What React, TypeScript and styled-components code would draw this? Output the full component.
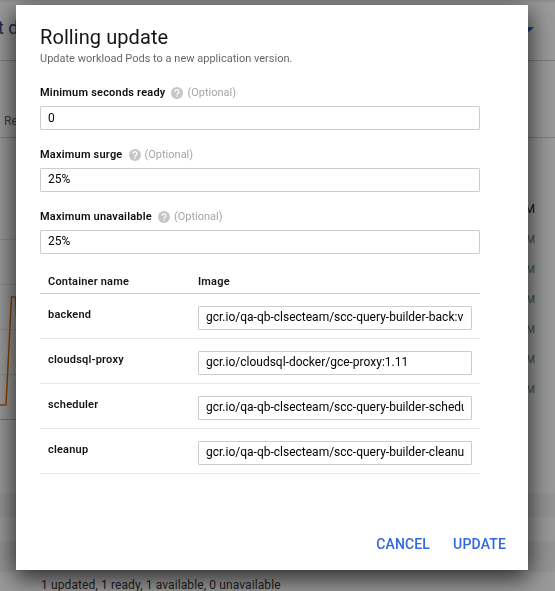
import React from 'react';
import styled, { createGlobalStyle } from 'styled-components';

const GlobalStyle = createGlobalStyle`
  * { box-sizing: border-box; }
  body { margin: 0; overflow: hidden; font-family: Roboto, "Liberation Sans", sans-serif; color: rgba(0,0,0,.92); background: #fff; }
`;

const Page = styled.div`
  height: 591px;
  display: flex;
  flex-direction: column;
  overflow: hidden;
`;

const PageHeader = styled.header`
  flex: none;
  height: 61px;
  display: flex;
  justify-content: space-between;
  border-bottom: 1px solid #d0d0d0;
  background: linear-gradient(#e6e6e6, #fff 3px);
`;

const PageTitle = styled.div`
  margin-left: -2px;
  padding-top: 17px;
  font-size: 18px;
  line-height: 21px;
  letter-spacing: -0.1px;
  color: #33497f;
`;

const Caret = styled.div`
  margin: 27px 21px 0 0;
  width: 10px;
  height: 5px;
  background: #3367d6;
  clip-path: polygon(0 0, 100% 0, 50% 100%);
`;

const PageTabs = styled.div`
  flex: none;
  height: 77px;
  padding: 52px 0 0 4px;
  font-size: 12px;
  line-height: 16px;
  color: #606060;
  border-bottom: 1px solid #d0d0d0;
`;

const ChartArea = styled.div`
  flex: none;
  height: 355px;
  display: flex;
  justify-content: space-between;
`;

const Legend = styled.div`
  width: 45px;
  padding: 63px 0 0 13px;
`;

const LegendItem = styled.div<{ $head?: boolean }>`
  width: 12px;
  display: flex;
  justify-content: flex-end;
  margin-bottom: ${p => (p.$head ? 8 : 0)}px;
  font-size: ${p => (p.$head ? 12 : 10)}px;
  line-height: ${p => (p.$head ? 16 : 30)}px;
  color: ${p => (p.$head ? '#222' : '#777')};
`;

const Band = styled.div<{ $h: number; $shaded?: boolean }>`
  flex: none;
  height: ${p => p.$h}px;
  background: ${p => (p.$shaded ? '#f5f5f5' : '#fff')};
`;

const Status = styled.div`
  padding: 5px 0 0 41px;
  font-size: 12px;
  line-height: 16px;
  letter-spacing: 0.11px;
  color: #333;
`;

const Scrim = styled.div`
  position: fixed;
  inset: 0;
  padding: 5px 27px 21px 16px;
  background: rgba(0, 0, 0, 0.4);
`;

const Dialog = styled.div`
  height: 565px;
  padding: 20px 20px 16px 24px;
  display: flex;
  flex-direction: column;
  background: #fff;
  box-shadow: 0 5px 26px rgba(0, 0, 0, 0.42), 0 8px 22px rgba(0, 0, 0, 0.5);
`;

const Heading = styled.h1`
  margin: 0;
  font-size: 20px;
  font-weight: 400;
  line-height: 24px;
  letter-spacing: 0.08px;
`;

const Subtitle = styled.p`
  margin: 2px 0 18px;
  font-size: 11px;
  line-height: 16px;
  color: rgba(0, 0, 0, 0.62);
`;

const Field = styled.label`
  width: 440px;
  height: 62px;
  display: flex;
  flex-direction: column;
  gap: 5px;
`;

const LabelRow = styled.span`
  height: 16px;
  display: flex;
  align-items: center;
  font-size: 11px;
  line-height: 16px;
  color: #a6a6a6;
  strong { font-weight: 600; letter-spacing: 0.21px; color: rgba(0, 0, 0, 0.95); }
  svg { flex: none; margin: 0 4px 1px 6px; }
`;

const Input = styled.input<{ $raised?: boolean }>`
  display: block;
  width: 100%;
  height: 24px;
  padding: ${p => (p.$raised ? '0 7px 3px' : '1px 7px 2px')};
  border: 1px solid #ccc;
  border-radius: 1px;
  outline: 0;
  background: #fff;
  color: #000;
  font: 400 12px/16px Roboto, "Liberation Sans", sans-serif;
`;

const ContainerTable = styled.div`
  width: 440px;
  margin-top: -5px;
`;

const Row = styled.div<{ $header?: boolean }>`
  height: ${p => (p.$header ? 28 : 45)}px;
  padding: ${p => (p.$header ? '8px 8px 0' : '12px 8px 0')};
  display: grid;
  grid-template-columns: 150px 274px;
  align-items: start;
  font-size: 11px;
  font-weight: 600;
  letter-spacing: 0.2px;
  line-height: 16px;
  border-bottom: 1px solid ${p => (p.$header ? '#ccc' : '#e6e6e6')};
`;

const ColumnTitle = styled.div`
  height: 16px;
`;

const Name = styled.div`
  padding-top: 1px;
`;

const Actions = styled.div`
  margin-top: auto;
  display: flex;
  justify-content: flex-end;
  gap: 19px;
`;

const Action = styled.button`
  height: 20px;
  margin: 0;
  padding: 0 2px;
  border: 0;
  background: none;
  color: #3068e2;
  font: 500 14px/20px Roboto, "Liberation Sans", sans-serif;
  letter-spacing: 0.16px;
`;

const HelpIcon = () => (
  <svg width="12" height="12" viewBox="0 0 12 12" aria-hidden="true">
    <circle cx="6" cy="6" r="6" fill="#c6c6c6" />
    <path d="M4.100 4.700a1.900 1.900 0 1 1 3.200 1.300C6.500 6.600 6 6.900 6 7.700" fill="none" stroke="#fff" strokeWidth="1.300" />
    <path d="M5.350 8.500h1.300v1.300h-1.300z" fill="#fff" />
  </svg>
);

const Chart = () => (
  <svg width="60" height="355" fill="none" aria-hidden="true">
    <path d="M0 101.500H60M0 146.500H60M0 191.500H60M0 236.500H60" stroke="#e6e6e6" />
    <path d="M0 281.500H60" stroke="#c0c0c0" />
    <path d="M0 267H6L11.500 159H15.500L18 210" stroke="#e8710a" strokeWidth="1.500" />
  </svg>
);

const fields = [
  { label: 'Minimum seconds ready', value: '0' },
  { label: 'Maximum surge', value: '25%' },
  { label: 'Maximum unavailable', value: '25%' },
];

const containers = [
  { name: 'backend', image: 'gcr.io/qa-qb-clsecteam/scc-query-builder-back:v' },
  { name: 'cloudsql-proxy', image: 'gcr.io/cloudsql-docker/gce-proxy:1.11' },
  { name: 'scheduler', image: 'gcr.io/qa-qb-clsecteam/scc-query-builder-scheduler' },
  { name: 'cleanup', image: 'gcr.io/qa-qb-clsecteam/scc-query-builder-cleanup' },
];

export default function App() {
  return (
    <>
      <GlobalStyle />
      <Page>
        <PageHeader>
          <PageTitle>t d</PageTitle>
          <Caret />
        </PageHeader>
        <PageTabs>Re</PageTabs>
        <ChartArea>
          <Chart />
          <Legend>
            <LegendItem $head>M</LegendItem>
            {[1, 2, 3, 4, 5, 6].map(n => <LegendItem key={n}>M</LegendItem>)}
          </Legend>
        </ChartArea>
        <Band $h={24} $shaded />
        <Band $h={24} />
        <Band $h={31} $shaded />
        <Status>1 updated, 1 ready, 1 available, 0 unavailable</Status>
      </Page>
      <Scrim>
        <Dialog role="dialog">
          <Heading>Rolling update</Heading>
          <Subtitle>Update workload Pods to a new application version.</Subtitle>
          {fields.map((f, i) => (
            <Field key={f.label}>
              <LabelRow><strong>{f.label}</strong><HelpIcon />(Optional)</LabelRow>
              <Input defaultValue={f.value} $raised={i > 0} />
            </Field>
          ))}
          <ContainerTable>
            <Row $header><ColumnTitle>Container name</ColumnTitle><ColumnTitle>Image</ColumnTitle></Row>
            {containers.map(c => (
              <Row key={c.name}>
                <Name>{c.name}</Name>
                <Input defaultValue={c.image} aria-label={`${c.name} image`} $raised />
              </Row>
            ))}
          </ContainerTable>
          <Actions>
            <Action>CANCEL</Action>
            <Action>UPDATE</Action>
          </Actions>
        </Dialog>
      </Scrim>
    </>
  );
}
